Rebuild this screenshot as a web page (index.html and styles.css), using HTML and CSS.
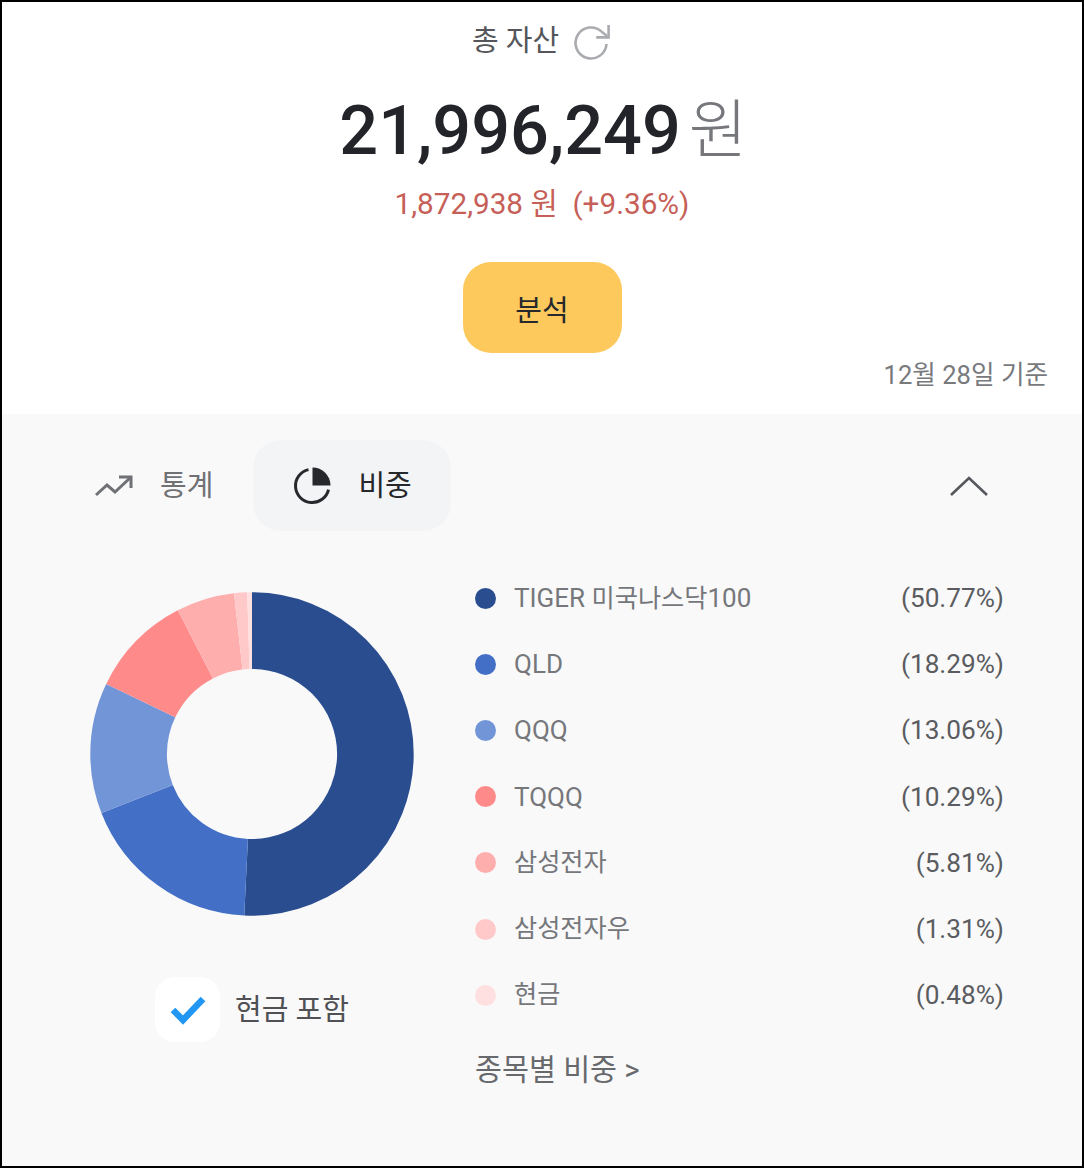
FILE: index.html
```html
<!DOCTYPE html>
<html lang="ko">
<head>
    <meta charset="UTF-8">
    <meta name="viewport" content="width=device-width, initial-scale=1.0">
    <title>총 자산</title>
    <link rel="stylesheet" href="styles.css">
</head>
<body>
    <div class="container">
        <div class="summary">
            <div class="summary-title">
                <span>총 자산</span>
                <svg class="refresh-icon" viewBox="0 0 38 38" fill="none">
                    <path d="M32.5 22a15.5 15.5 0 1 1-4.6-12.1L33 14" stroke="#a9abae" stroke-width="2.6"/>
                    <path d="M34.6 3v12.4H22.2" stroke="#a9abae" stroke-width="2.6"/>
                </svg>
            </div>
            <div class="total">
                <span class="total-number">21,996,249</span>
                <span class="total-unit">원</span>
            </div>
            <div class="profit">1,872,938 원&nbsp; (+9.36%)</div>
            <button class="analyze-btn">분석</button>
            <div class="base-date">12월 28일 기준</div>
        </div>

        <div class="details">
            <div class="tabs">
                <div class="tab">
                    <svg class="trend-icon" viewBox="0 0 38 24" fill="none">
                        <path d="M1 21l11-10 8 7L35 4" stroke="#6f7174" stroke-width="3"/>
                        <path d="M24 3h12v11" stroke="#6f7174" stroke-width="3"/>
                    </svg>
                    <span>통계</span>
                </div>
                <div class="tab active">
                    <svg class="pie-icon" viewBox="0 0 38 38" fill="none">
                        <path d="M15.5 2.6a16.7 16.7 0 1 0 20 20" stroke="#26282c" stroke-width="3"/>
                        <path d="M19.5 0.5a18 18 0 0 1 18 18h-18z" fill="#26282c"/>
                    </svg>
                    <span>비중</span>
                </div>
                <svg class="chevron" viewBox="0 0 40 22" fill="none">
                    <path d="M2 20L20 3l18 17" stroke="#55585c" stroke-width="2.6"/>
                </svg>
            </div>

            <div class="content">
                <div class="chart-col">
                    <svg class="donut" viewBox="0 0 324 324" fill="none">
                        <g transform="rotate(-90 162 162)" stroke-width="76.6">
                            <circle cx="162" cy="162" r="123.4" pathLength="100" stroke="#2a4d8f" stroke-dasharray="50.77 49.23" stroke-dashoffset="0"/>
                            <circle cx="162" cy="162" r="123.4" pathLength="100" stroke="#4370c6" stroke-dasharray="18.29 81.71" stroke-dashoffset="-50.77"/>
                            <circle cx="162" cy="162" r="123.4" pathLength="100" stroke="#7295d8" stroke-dasharray="13.06 86.94" stroke-dashoffset="-69.06"/>
                            <circle cx="162" cy="162" r="123.4" pathLength="100" stroke="#ff8a8a" stroke-dasharray="10.29 89.71" stroke-dashoffset="-82.12"/>
                            <circle cx="162" cy="162" r="123.4" pathLength="100" stroke="#ffaeae" stroke-dasharray="5.81 94.19" stroke-dashoffset="-92.41"/>
                            <circle cx="162" cy="162" r="123.4" pathLength="100" stroke="#ffc9c9" stroke-dasharray="1.31 98.69" stroke-dashoffset="-98.22"/>
                            <circle cx="162" cy="162" r="123.4" pathLength="100" stroke="#ffe0e0" stroke-dasharray="0.47 99.53" stroke-dashoffset="-99.53"/>
                        </g>
                    </svg>
                    <div class="cash-check">
                        <div class="checkbox">
                            <svg viewBox="0 0 36 30" fill="none">
                                <path d="M3 15l10 10L33 4" stroke="#2196f3" stroke-width="6.5"/>
                            </svg>
                        </div>
                        <span>현금 포함</span>
                    </div>
                </div>

                <div class="legend-col">
                    <ul class="legend">
                        <li class="legend-item"><i class="dot c1"></i><span class="legend-name">TIGER <span class="ko">미국나스닥</span>100</span><span class="legend-rate">(50.77%)</span></li>
                        <li class="legend-item"><i class="dot c2"></i><span class="legend-name">QLD</span><span class="legend-rate">(18.29%)</span></li>
                        <li class="legend-item"><i class="dot c3"></i><span class="legend-name">QQQ</span><span class="legend-rate">(13.06%)</span></li>
                        <li class="legend-item"><i class="dot c4"></i><span class="legend-name">TQQQ</span><span class="legend-rate">(10.29%)</span></li>
                        <li class="legend-item"><i class="dot c5"></i><span class="legend-name ko">삼성전자</span><span class="legend-rate">(5.81%)</span></li>
                        <li class="legend-item"><i class="dot c6"></i><span class="legend-name ko">삼성전자우</span><span class="legend-rate">(1.31%)</span></li>
                        <li class="legend-item"><i class="dot c7"></i><span class="legend-name ko">현금</span><span class="legend-rate">(0.48%)</span></li>
                    </ul>
                    <div class="more-link">종목별 비중 &gt;</div>
                </div>
            </div>
        </div>
    </div>
</body>
</html>
```

FILE: styles.css
```css
* {
    margin: 0;
    padding: 0;
    box-sizing: border-box;
}

body {
    font-family: Roboto, 'Noto Sans CJK KR', sans-serif;
    line-height: 40px;
    background: white;
}

.container {
    width: 1084px;
    height: 1168px;
    border: 2px solid #000;
    display: flex;
    flex-direction: column;
    overflow: hidden;
}

.summary {
    height: 412px;
    background: white;
    display: flex;
    flex-direction: column;
    align-items: center;
    padding-top: 20px;
}

.summary-title {
    display: flex;
    align-items: center;
    gap: 15px;
    height: 38px;
    font-size: 29px;
    color: #54565a;
}

.refresh-icon {
    width: 38px;
    height: 38px;
}

.total {
    display: flex;
    align-items: center;
    gap: 8px;
    height: 80px;
    margin-top: 31px;
    margin-left: 3px;
    line-height: 80px;
}

.total-number {
    font-size: 68.4px;
    font-weight: 500;
    color: #222429;
}

.total-unit {
    font-size: 64px;
    font-weight: 300;
    color: #75777b;
}

.profit {
    margin-top: 13px;
    font-size: 29.7px;
    color: #c65f58;
}

.analyze-btn {
    width: 159px;
    height: 91px;
    margin-top: 38px;
    border: none;
    border-radius: 28px;
    background: #fec95c;
    font-family: inherit;
    font-size: 29px;
    color: #26282c;
}

.base-date {
    align-self: flex-end;
    margin-top: 2px;
    margin-right: 34px;
    font-size: 25.6px;
    color: #77797d;
}

.details {
    flex: 1;
    background: #f9f9fa;
    padding: 26px 0 0;
}

.tabs {
    display: flex;
    align-items: center;
    height: 91px;
    padding-left: 71px;
}

.tab {
    display: flex;
    align-items: center;
    height: 91px;
    font-size: 29px;
    color: #6f7174;
}

.tab span {
    margin-left: 27px;
}

.tab.active {
    width: 198px;
    margin-left: 40px;
    padding-left: 40px;
    border-radius: 28px;
    background: #f3f4f6;
    color: #26282c;
}

.trend-icon {
    width: 38px;
    height: 24px;
    margin-left: 22px;
}

.pie-icon {
    width: 38px;
    height: 38px;
}

.chevron {
    width: 40px;
    height: 22px;
    margin-left: auto;
    margin-right: 93px;
}

.content {
    display: flex;
    margin-top: 60.5px;
}

.chart-col {
    width: 473px;
    padding-left: 87.5px;
}

.donut {
    display: block;
    width: 324px;
    height: 324px;
}

.cash-check {
    display: flex;
    align-items: center;
    gap: 15px;
    margin-top: 61.5px;
    margin-left: 65.5px;
    font-size: 29px;
    color: #4f5155;
}

.checkbox {
    width: 65px;
    height: 65px;
    border-radius: 20px;
    background: white;
    display: flex;
    align-items: center;
    justify-content: center;
}

.checkbox svg {
    width: 36px;
    height: 30px;
}

.legend-col {
    flex: 1;
    padding-right: 78px;
}

.legend {
    list-style: none;
    margin-top: -26.5px;
}

.legend-item {
    display: flex;
    align-items: center;
    height: 66.2px;
    font-size: 26px;
    color: #75777b;
}

.ko {
    font-size: 25.2px;
}

.dot {
    width: 21px;
    height: 21px;
    border-radius: 50%;
    margin-right: 18px;
}

.c1 { background: #2a4d8f; }
.c2 { background: #4370c6; }
.c3 { background: #7295d8; }
.c4 { background: #ff8a8a; }
.c5 { background: #ffaeae; }
.c6 { background: #ffc9c9; }
.c7 { background: #ffe0e0; }

.legend-rate {
    margin-left: auto;
    font-size: 26.2px;
    color: #5a5c60;
}

.more-link {
    margin-top: 21.5px;
    font-size: 29.3px;
    color: #67696d;
}
```
